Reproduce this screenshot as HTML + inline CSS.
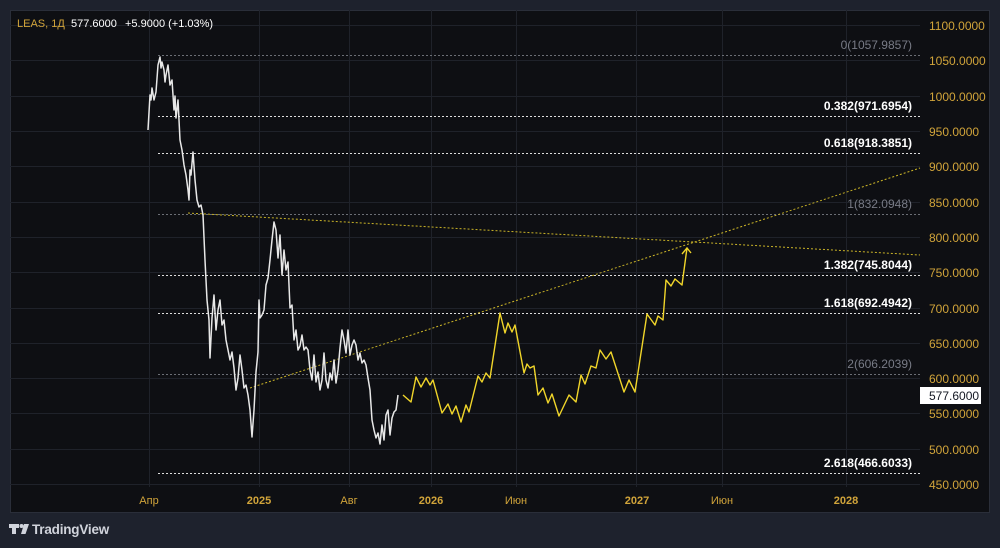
<!DOCTYPE html>
<html><head><meta charset="utf-8"><style>
html,body{margin:0;padding:0;background:#1e222d;width:1000px;height:548px;overflow:hidden;font-family:"Liberation Sans",sans-serif}
</style></head><body>
<svg width="1000" height="548" viewBox="0 0 1000 548" xmlns="http://www.w3.org/2000/svg" style="position:absolute;left:0;top:0">
<rect x="0" y="0" width="1000" height="548" fill="#1e222d"/>
<rect x="10" y="10" width="980" height="503" fill="#0e0f13"/>
<rect x="10.5" y="10.5" width="979" height="502" fill="none" stroke="#2a2e39"/>
<g stroke="#1f222a" stroke-width="1">
<line x1="149.5" y1="10" x2="149.5" y2="487"/><line x1="259.5" y1="10" x2="259.5" y2="487"/><line x1="349.5" y1="10" x2="349.5" y2="487"/><line x1="431.5" y1="10" x2="431.5" y2="487"/><line x1="516.5" y1="10" x2="516.5" y2="487"/><line x1="636.5" y1="10" x2="636.5" y2="487"/><line x1="722.5" y1="10" x2="722.5" y2="487"/><line x1="846.5" y1="10" x2="846.5" y2="487"/>
<line x1="10" y1="25.5" x2="920" y2="25.5"/><line x1="10" y1="60.5" x2="920" y2="60.5"/><line x1="10" y1="96.5" x2="920" y2="96.5"/><line x1="10" y1="131.5" x2="920" y2="131.5"/><line x1="10" y1="166.5" x2="920" y2="166.5"/><line x1="10" y1="202.5" x2="920" y2="202.5"/><line x1="10" y1="237.5" x2="920" y2="237.5"/><line x1="10" y1="272.5" x2="920" y2="272.5"/><line x1="10" y1="308.5" x2="920" y2="308.5"/><line x1="10" y1="343.5" x2="920" y2="343.5"/><line x1="10" y1="378.5" x2="920" y2="378.5"/><line x1="10" y1="413.5" x2="920" y2="413.5"/><line x1="10" y1="449.5" x2="920" y2="449.5"/><line x1="10" y1="484.5" x2="920" y2="484.5"/>
</g>
<g stroke-dasharray="2,2" stroke-width="1">
<line x1="158" y1="55.5" x2="920" y2="55.5" stroke="#6b6e75"/>
<line x1="158" y1="116.5" x2="920" y2="116.5" stroke="#dddddd"/>
<line x1="158" y1="153.5" x2="920" y2="153.5" stroke="#dddddd"/>
<line x1="158" y1="214.5" x2="920" y2="214.5" stroke="#6b6e75"/>
<line x1="158" y1="275.5" x2="920" y2="275.5" stroke="#dddddd"/>
<line x1="158" y1="313.5" x2="920" y2="313.5" stroke="#dddddd"/>
<line x1="158" y1="374.5" x2="920" y2="374.5" stroke="#6b6e75"/>
<line x1="158" y1="473.5" x2="920" y2="473.5" stroke="#dddddd"/>
<line x1="188" y1="213" x2="920" y2="255" stroke="#c9b327"/>
<line x1="250" y1="388" x2="920" y2="168" stroke="#c9b327"/>
</g>
<polyline fill="none" stroke="#e8e8e8" stroke-width="1.5" stroke-linejoin="round" points="148,130 150,95 151,100 152,88 154,100 156,92 158,65 160,57 161,68 162,62 164,70 165,82 166,75 168,65 170,85 172,80 174,110 175,96 176,118 178,100 180,140 182,150 184,165 186,175 188,190 189,200 190,170 191,175 193,152 195,180 197,200 199,207 201,205 203,215 205,260 207,300 209,320 210,358 212,318 214,295 216,330 218,310 220,300 222,325 224,320 226,340 228,350 230,360 232,352 234,368 236,390 238,378 240,355 242,370 244,388 246,385 248,395 250,410 252,437 254,410 256,372 258,352 259,300 260,318 262,315 264,310 266,285 268,278 270,260 272,240 274,222 276,230 278,258 280,235 282,275 284,250 286,270 288,262 290,308 292,305 294,340 296,330 298,350 300,346 302,335 304,350 306,347 308,350 310,370 312,380 314,355 316,382 318,372 320,390 322,380 324,353 326,380 328,388 330,373 332,380 334,360 336,383 338,370 340,348 342,330 344,340 346,353 348,330 350,355 352,345 354,340 356,345 358,360 360,353 362,363 364,360 366,365 368,378 370,390 372,420 374,430 376,438 378,433 380,444 382,425 384,440 386,415 388,410 390,435 392,418 394,412 396,410 398,395"/>
<polyline fill="none" stroke="#f0d52a" stroke-width="1.4" stroke-linejoin="round" points="403,395 411,402 416,377 421,387 426,378 430,385 433,380 442,413 448,404 452,414 456,406 461,422 466,405 469,412 478,376 482,382 486,373 490,378 500,313 505,333 508,323 512,332 515,325 524,373 527,364 530,368 534,366 538,395 543,388 548,403 552,394 559,416 569,395 576,402 581,375 585,384 591,366 596,368 600,350 606,359 611,352 624,392 629,380 635,392 647,314 655,325 658,316 663,320 666,280 671,286 675,279 682,285 687,248"/>
<polyline fill="none" stroke="#f0d52a" stroke-width="1.4" points="682,254 687,248 691,253"/>
<g font-size="12" text-anchor="end">
<text x="912" y="49" fill="#787b86">0(1057.9857)</text>
<text x="912" y="110" fill="#ffffff" font-weight="bold">0.382(971.6954)</text>
<text x="912" y="147" fill="#ffffff" font-weight="bold">0.618(918.3851)</text>
<text x="912" y="208" fill="#787b86">1(832.0948)</text>
<text x="912" y="269" fill="#ffffff" font-weight="bold">1.382(745.8044)</text>
<text x="912" y="307" fill="#ffffff" font-weight="bold">1.618(692.4942)</text>
<text x="912" y="368" fill="#787b86">2(606.2039)</text>
<text x="912" y="467" fill="#ffffff" font-weight="bold">2.618(466.6033)</text>
</g>
<g font-size="12" fill="#d1a43a">
<text x="929" y="30">1100.0000</text><text x="929" y="65">1050.0000</text><text x="929" y="101">1000.0000</text><text x="929" y="136">950.0000</text><text x="929" y="171">900.0000</text><text x="929" y="207">850.0000</text><text x="929" y="242">800.0000</text><text x="929" y="277">750.0000</text><text x="929" y="313">700.0000</text><text x="929" y="348">650.0000</text><text x="929" y="383">600.0000</text><text x="929" y="418">550.0000</text><text x="929" y="454">500.0000</text><text x="929" y="489">450.0000</text>
</g>
<rect x="920" y="387" width="61" height="17" fill="#ffffff"/>
<text x="929" y="400" font-size="12" fill="#131722">577.6000</text>
<g font-size="11" fill="#d1a43a" text-anchor="middle" font-weight="bold">
<text x="149" y="504" font-weight="normal">Апр</text><text x="259" y="504">2025</text><text x="349" y="504" font-weight="normal">Авг</text><text x="431" y="504">2026</text><text x="516" y="504" font-weight="normal">Июн</text><text x="637" y="504">2027</text><text x="722" y="504" font-weight="normal">Июн</text><text x="846" y="504">2028</text>
</g>
<text x="17" y="27" font-size="11" fill="#d1a43a">LEAS, 1Д</text>
<text x="71" y="27" font-size="11" fill="#ffffff">577.6000</text>
<text x="125" y="27" font-size="11" fill="#ffffff">+5.9000 (+1.03%)</text>
<g fill="#d1d4dc">
<path d="M9,524 h10 v4 h-3 v6 h-4 v-6 h-3z"/>
<circle cx="21.5" cy="526" r="2"/>
<path d="M24,524 h5 l-3.5,10 h-4.5z"/>
</g>
<text x="32" y="534" font-size="13.5" fill="#d1d4dc" font-weight="bold" letter-spacing="-0.2">TradingView</text>
</svg>
</body></html>
